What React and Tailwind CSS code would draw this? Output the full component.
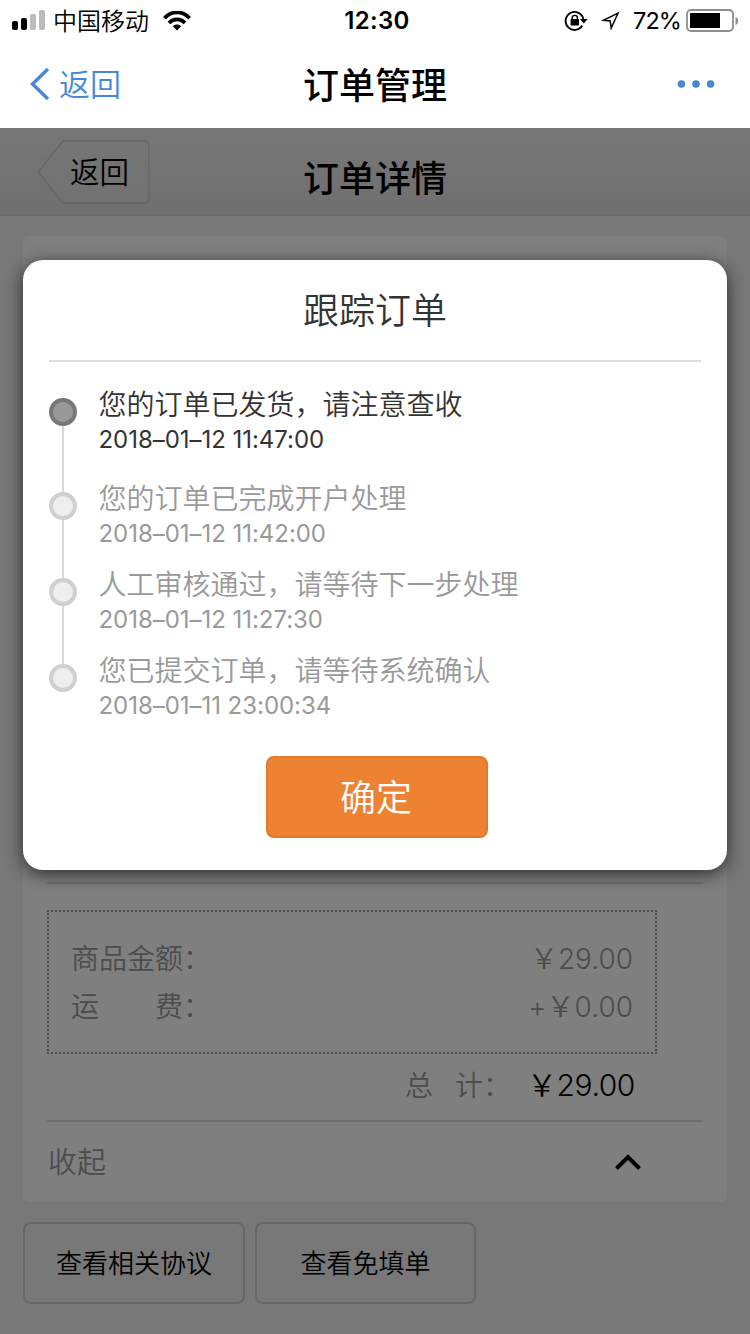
import React from 'react';

const steps = [
  { title: '您的订单已发货，请注意查收', time: '2018–01–12 11:47:00', active: true, gap: 'h-[94px]' },
  { title: '您的订单已完成开户处理', time: '2018–01–12 11:42:00', gap: 'h-[86px]' },
  { title: '人工审核通过，请等待下一步处理', time: '2018–01–12 11:27:30', gap: 'h-[86px]' },
  { title: '您已提交订单，请等待系统确认', time: '2018–01–11 23:00:34', gap: 'h-[72px]' },
];

function StatusBar() {
  return (
    <div className="grid h-10 grid-cols-3 items-center pt-0.5 text-2xl leading-none text-black">
      <div className="flex items-center pl-3">
        <svg width="34" height="22" viewBox="0 0 34 22">
          <rect x="0" y="11" width="6" height="9" rx="2" fill="#000" />
          <rect x="9" y="8" width="6" height="12" rx="2" fill="#000" />
          <rect x="18" y="4" width="6" height="16" rx="2" fill="#bcbcbc" />
          <rect x="27" y="0" width="6" height="20" rx="2" fill="#bcbcbc" />
        </svg>
        <span className="ml-[7px] w-24 pt-0.5 whitespace-nowrap">中国移动</span>
        <svg className="ml-3.5" width="28" height="20" viewBox="0 0 28 20" fill="none" stroke="#000" strokeWidth="3.6">
          <path d="M1.4 7.2 C8.5 -0.6 19.5 -0.6 26.6 7.2" />
          <path d="M6 12 C10.5 7.2 17.5 7.2 22 12" />
          <path d="M14 19.6 L9.8 15.3 C12.2 12.9 15.8 12.9 18.2 15.3 Z" fill="#000" stroke="none" />
        </svg>
      </div>
      <div className="pl-1 text-center font-semibold tracking-[0.3px]">12:30</div>
      <div className="flex items-center justify-end pr-[11px]">
        <svg width="24" height="22" viewBox="0 0 24 22" fill="none">
          <path d="M18.3 15.6 A9 9 0 1 1 19.4 9" stroke="#000" strokeWidth="1.9" />
          <path d="M16 9 H23.6 L19.8 13.4 Z" fill="#000" />
          <rect x="6.6" y="9" width="8.4" height="6.6" rx="0.8" fill="#000" />
          <path d="M8.2 10 V8 a2.6 2.6 0 0 1 5.2 0 V10" stroke="#000" strokeWidth="1.4" />
        </svg>
        <svg className="ml-3" width="20" height="20" viewBox="0 0 20 20" fill="none" stroke="#000" strokeWidth="1.5" strokeLinejoin="miter">
          <path d="M18 2.2 L3.5 9.3 L10.2 9.9 L11.2 17 Z" />
        </svg>
        <span className="ml-[13px] w-[47px] text-[23.5px] font-normal whitespace-nowrap tracking-[-0.9px]">72%</span>
        <svg className="ml-[6px]" width="53" height="24" viewBox="0 0 53 24">
          <rect x="1" y="1" width="46" height="21" rx="4" fill="none" stroke="#8e8e8e" strokeWidth="1.8" />
          <rect x="4" y="4" width="30" height="15" fill="#000" />
          <path d="M49.5 8 C53 9 53 15 49.5 16 Z" fill="#8e8e8e" />
        </svg>
      </div>
    </div>
  );
}

function NavBar() {
  return (
    <div className="grid h-[88px] grid-cols-3 items-center">
      <div className="flex items-center pl-[30px] text-[31px] leading-none text-[#4688d6]">
        <svg width="20" height="34" viewBox="0 0 20 34" fill="none" stroke="currentColor" strokeWidth="3.4">
          <path d="M18 2 L2.5 17 L18 32" />
        </svg>
        <span className="ml-[9px]">返回</span>
      </div>
      <div className="pt-[3px] text-center text-4xl leading-none font-medium text-black">订单管理</div>
      <div className="flex justify-end pr-[35px]">
        <svg width="38" height="8" viewBox="0 0 38 8" fill="#4688d6">
          <circle cx="4.4" cy="4" r="3.8" />
          <circle cx="19" cy="4" r="3.8" />
          <circle cx="33.6" cy="4" r="3.8" />
        </svg>
      </div>
    </div>
  );
}

function OrderPage() {
  return (
    <div className="flex h-full flex-col">
      <div className="grid h-[88px] shrink-0 grid-cols-3 items-center border-b border-[#d4d4d4] bg-linear-to-b from-[#f0eeee] to-[#dfdfdf]">
        <div className="relative ml-[37px] h-16 w-[114px]">
          <svg className="absolute inset-0" width="114" height="64" viewBox="0 0 114 64" fill="none">
            <path d="M26 1 H107 Q112 1 112 6 V58 Q112 63 107 63 H26 L2 33 Q1 32 2 31 Z" fill="#e9e9e9" fillOpacity="0.4" stroke="#cccccc" strokeWidth="1.3" />
          </svg>
          <span className="relative block pt-px pl-[33px] text-[29.5px] leading-[63px] text-black">返回</span>
        </div>
        <div className="pt-[15px] text-center text-4xl leading-none font-medium text-black">订单详情</div>
      </div>

      <div className="mx-[23px] mt-5 flex h-[966px] shrink-0 flex-col justify-end rounded-md bg-white px-6 text-[28px] text-[#999]">
        <div className="h-7 border-t-2 border-[#dcdcdc]" />
        <div className="h-36 w-[610px] border-2 border-dotted border-[#999] px-[22px] pt-[23px] leading-[48px]">
          <div className="flex justify-between">
            <span>商品金额：</span>
            <span>￥29.00</span>
          </div>
          <div className="flex justify-between">
            <span>运<span className="inline-block w-14" />费：</span>
            <span>+￥0.00</span>
          </div>
        </div>
        <div className="flex h-[68px] items-center justify-end border-b-2 border-[#dcdcdc] pr-[68px] pb-[3px]">
          <span className="w-[122px] pt-px whitespace-nowrap">总<span className="inline-block w-[22px]" />计：</span>
          <span className="text-[30px] tracking-[-0.4px] text-black">￥29.00</span>
        </div>
        <div className="flex h-20 items-center justify-between pr-[61px] text-[29px]">
          <span className="pt-0.5 pl-px">收起</span>
          <svg width="28" height="18" viewBox="0 0 28 18" fill="none" stroke="#000" strokeWidth="4">
            <path d="M2.5 15.5 L14 4 L25.5 15.5" />
          </svg>
        </div>
      </div>

      <div className="mt-5 ml-[23px] flex gap-2.5 text-[26px] text-black">
        <button className="h-[82px] w-[222px] rounded-lg border-2 border-[#cfcfcf]">查看相关协议</button>
        <button className="h-[82px] w-[221px] rounded-lg border-2 border-[#cfcfcf]">查看免填单</button>
      </div>
    </div>
  );
}

function TrackingDialog() {
  return (
    <div className="absolute top-[132px] left-[23px] flex h-[610px] w-[704px] flex-col rounded-[20px] bg-white px-[26px] shadow-[0_4px_18px_rgba(0,0,0,0.65)]">
      <h2 className="h-[102px] shrink-0 border-b-2 border-[#dedede] text-center text-4xl leading-[102px] font-[350] text-[#333]">跟踪订单</h2>
      <ol className="mt-6">
        {steps.map((s, i) => (
          <li key={s.title} className={`flex ${s.gap} ${s.active ? 'text-[#333]' : 'text-[#999]'}`}>
            <div className="flex w-[28px] flex-col items-center">
              <div className={`w-0.5 ${i > 0 ? 'bg-[#d9d9d9]' : ''} h-3 shrink-0`} />
              <div className={`size-7 shrink-0 rounded-full border-4 ${s.active ? 'border-[#777] bg-[#999]' : 'border-[#d0d0d0] bg-[#eee]'}`} />
              {i < steps.length - 1 && <div className="w-0.5 grow bg-[#d9d9d9]" />}
            </div>
            <div className="ml-[21.5px]">
              <p className="h-9 text-[28px] leading-[38px]">{s.title}</p>
              <p className="h-9 text-2xl leading-9 font-normal tracking-[-0.04px]">{s.time}</p>
            </div>
          </li>
        ))}
      </ol>
      <button className="mt-8 ml-[217px] h-[82px] w-[222px] shrink-0 rounded-lg border-2 border-[#df7a30] bg-[#ed8233] pt-0.5 pr-0.5 text-[36px] text-white">确定</button>
    </div>
  );
}

export default function App() {
  return (
    <div className="flex h-[1334px] w-[750px] flex-col overflow-hidden bg-white font-['Inter','Noto_Sans_CJK_SC',sans-serif] font-[350]">
      <StatusBar />
      <NavBar />
      <main className="relative h-[1206px] bg-[#f0f0f0]">
        <OrderPage />
        <div className="absolute inset-0 bg-black/50" />
        <TrackingDialog />
      </main>
    </div>
  );
}
